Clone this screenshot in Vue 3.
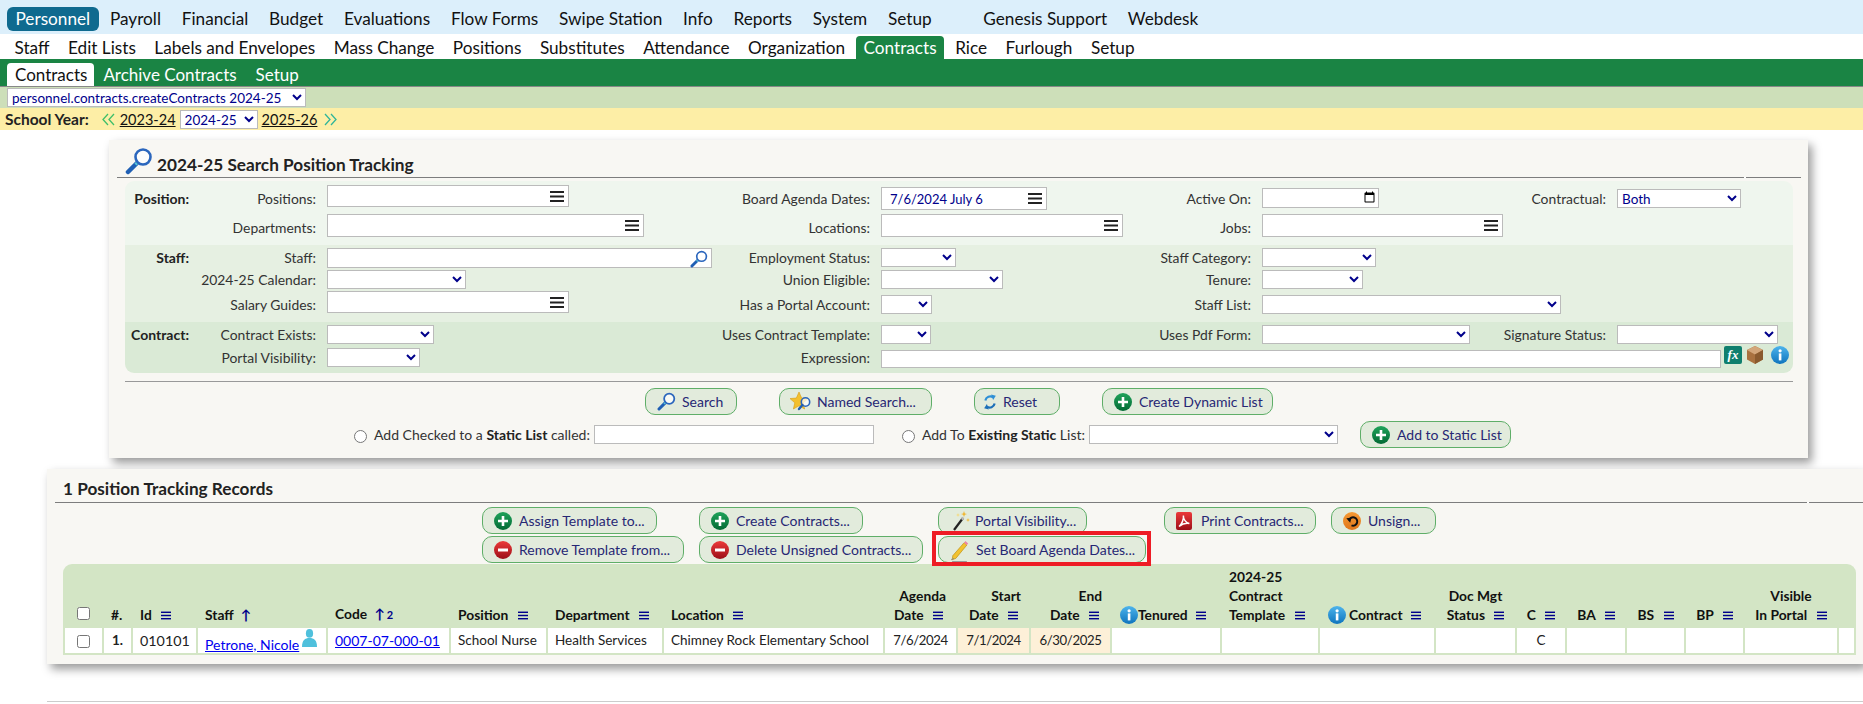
<script setup>
const nav1 = ['Payroll','Financial','Budget','Evaluations','Flow Forms','Swipe Station','Info','Reports','System','Setup']
const nav1b = ['Genesis Support','Webdesk']
const nav2a = ['Staff','Edit Lists','Labels and Envelopes','Mass Change','Positions','Substitutes','Attendance','Organization']
const nav2b = ['Rice','Furlough','Setup']

const sections = [
  { cls: 's1', rows: [
    { h: 33, lt: 18, title: 'Position:', cells: [
      { c: 1, label: 'Positions:', kind: 'list', w: 242, fh: 22, t: 4 },
      { c: 2, label: 'Board Agenda Dates:', kind: 'list', w: 166, fh: 23, t: 6, value: '7/6/2024 July 6' },
      { c: 3, label: 'Active On:', kind: 'date', w: 117, fh: 20, t: 7 },
      { c: 4, label: 'Contractual:', kind: 'sel', w: 124, fh: 19, t: 8, value: 'Both' }
    ]},
    { h: 31, lt: 14, cells: [
      { c: 1, label: 'Departments:', kind: 'list', w: 317, fh: 23, t: 0 },
      { c: 2, label: 'Locations:', kind: 'list', w: 242, fh: 23, t: 0 },
      { c: 3, label: 'Jobs:', kind: 'list', w: 241, fh: 23, t: 0 }
    ]}
  ]},
  { cls: 's2', rows: [
    { h: 24, lt: 13, title: 'Staff:', cells: [
      { c: 1, label: 'Staff:', kind: 'staff', w: 385, fh: 20, t: 3 },
      { c: 2, label: 'Employment Status:', kind: 'sel', w: 75, fh: 19, t: 3 },
      { c: 3, label: 'Staff Category:', kind: 'sel', w: 114, fh: 19, t: 3 }
    ]},
    { h: 21, lt: 11, cells: [
      { c: 1, label: '2024-25 Calendar:', kind: 'sel', w: 139, fh: 19, t: 1 },
      { c: 2, label: 'Union Eligible:', kind: 'sel', w: 122, fh: 19, t: 1 },
      { c: 3, label: 'Tenure:', kind: 'sel', w: 101, fh: 19, t: 1 }
    ]},
    { h: 32, lt: 15, cells: [
      { c: 1, label: 'Salary Guides:', kind: 'list', w: 242, fh: 22, t: 1 },
      { c: 2, label: 'Has a Portal Account:', kind: 'sel', w: 51, fh: 19, t: 5 },
      { c: 3, label: 'Staff List:', kind: 'sel', w: 299, fh: 19, t: 5 }
    ]}
  ]},
  { cls: 's3', rows: [
    { h: 24, lt: 13, title: 'Contract:', cells: [
      { c: 1, label: 'Contract Exists:', kind: 'sel', w: 107, fh: 19, t: 3 },
      { c: 2, label: 'Uses Contract Template:', kind: 'sel', w: 50, fh: 19, t: 3 },
      { c: 3, label: 'Uses Pdf Form:', kind: 'sel', w: 208, fh: 19, t: 3 },
      { c: 4, label: 'Signature Status:', kind: 'sel', w: 161, fh: 19, t: 3 }
    ]},
    { h: 27, lt: 12, cells: [
      { c: 1, label: 'Portal Visibility:', kind: 'sel', w: 93, fh: 19, t: 2 },
      { c: 2, label: 'Expression:', kind: 'expr', w: 840, fh: 18, t: 4 }
    ]}
  ]}
]

const searchButtons = [
  { icon: 'mag', text: 'Search', w: 92 },
  { icon: 'star', text: 'Named Search...', w: 153 },
  { icon: 'sync', text: 'Reset', w: 86 },
  { icon: 'plus', text: 'Create Dynamic List', w: 171 }
]

const actionCols = [
  { w: 202, gap: 15, btns: [{ icon: 'plus', text: 'Assign Template to...', w: 175 }, { icon: 'minus', text: 'Remove Template from...', w: 202 }] },
  { w: 224, gap: 15, btns: [{ icon: 'plus', text: 'Create Contracts...', w: 164 }, { icon: 'minus', text: 'Delete Unsigned Contracts...', w: 224 }] },
  { w: 208, gap: 18, btns: [{ icon: 'wand', text: 'Portal Visibility...', w: 149 }, { icon: 'pencil', text: 'Set Board Agenda Dates...', w: 208, marked: true }] },
  { w: 152, gap: 15, btns: [{ icon: 'pdf', text: 'Print Contracts...', w: 152 }] },
  { w: 105, gap: 0, btns: [{ icon: 'undo', text: 'Unsign...', w: 105 }] }
]

const colWidths = [37,27,63,128,121,95,114,219,71,71,79,108,96,114,79,48,58,57,57,92,15]
const trailing = ['', '', '', '', 'C', '', '', '', '', '']
</script>

<template>
  <svg class="sprite" aria-hidden="true">
    <defs>
      <linearGradient id="gGreen" x1="0" y1="0" x2="0" y2="1"><stop offset="0" stop-color="#1fa35a"/><stop offset="1" stop-color="#036a35"/></linearGradient>
      <linearGradient id="gRed" x1="0" y1="0" x2="0" y2="1"><stop offset="0" stop-color="#ec3a3a"/><stop offset="1" stop-color="#9c0f18"/></linearGradient>
      <linearGradient id="gBlue" x1="0" y1="0" x2="0" y2="1"><stop offset="0" stop-color="#4db4ec"/><stop offset="1" stop-color="#0f74bd"/></linearGradient>
      <linearGradient id="gOrange" x1="0" y1="0" x2="0" y2="1"><stop offset="0" stop-color="#f59a34"/><stop offset="1" stop-color="#e0761a"/></linearGradient>
    </defs>
    <symbol id="i-menu" viewBox="0 0 14 11"><rect width="14" height="2" y="0"/><rect width="14" height="2" y="4.5"/><rect width="14" height="2" y="9"/></symbol>
    <symbol id="i-mag" viewBox="0 0 28 28">
      <path d="M3 25 L12 16" stroke="#1f5fb4" stroke-width="4.5" stroke-linecap="round"/>
      <path d="M10.5 17.5 L13 15" stroke="#58c7d8" stroke-width="3"/>
      <circle cx="18" cy="10" r="7.5" fill="#fff" fill-opacity=".75" stroke="#2b66bd" stroke-width="2.6"/>
    </symbol>
    <symbol id="i-plus" viewBox="0 0 18 18"><circle cx="9" cy="9" r="9" fill="url(#gGreen)"/><path d="M9 4v10M4 9h10" stroke="#fff" stroke-width="2.6"/></symbol>
    <symbol id="i-minus" viewBox="0 0 18 18"><circle cx="9" cy="9" r="9" fill="url(#gRed)"/><path d="M4 9h10" stroke="#fff" stroke-width="3"/></symbol>
    <symbol id="i-info" viewBox="0 0 18 18"><circle cx="9" cy="9" r="9" fill="url(#gBlue)"/><rect x="7.8" y="7.4" width="2.6" height="7" fill="#fff"/><circle cx="9.1" cy="4.8" r="1.6" fill="#fff"/></symbol>
    <symbol id="i-undo" viewBox="0 0 18 18"><circle cx="9" cy="9" r="9" fill="url(#gOrange)"/><path d="M6 8.5 A4.2 4.2 0 1 1 8.5 13.4" fill="none" stroke="#111" stroke-width="2"/><path d="M3.3 6.2 L8.4 5.8 L7.2 10.8Z" fill="#111"/></symbol>
    <symbol id="i-pdf" viewBox="0 0 16 18"><rect width="16" height="18" rx="2" fill="url(#gRed)"/><path d="M3 14.5 C6 12 8 7 7.4 3.6 C7 7 10 11 13.4 11.4 C10 10.8 6 12 3 14.5Z" fill="none" stroke="#fff" stroke-width="1.5"/></symbol>
    <symbol id="i-sync" viewBox="0 0 18 22">
      <path d="M3 9 A6.5 6.5 0 0 1 13 5" fill="none" stroke="#2f8fd6" stroke-width="2.8"/><path d="M10.5 1.5 L16.5 3 L13 8.5Z" fill="#2f8fd6"/>
      <path d="M15 13 A6.5 6.5 0 0 1 5 17" fill="none" stroke="#1c6fb8" stroke-width="2.8"/><path d="M7.5 20.5 L1.5 19 L5 13.5Z" fill="#1c6fb8"/>
    </symbol>
    <symbol id="i-star" viewBox="0 0 24 22">
      <path d="M9 1 L11.6 7 L18 7.6 L13.2 11.8 L14.6 18 L9 14.8 L3.4 18 L4.8 11.8 L0 7.6 L6.4 7Z" fill="#f3c02f" stroke="#d89a12" stroke-width=".6"/>
      <circle cx="15.5" cy="11" r="4.2" fill="#fff" fill-opacity=".7" stroke="#2b66bd" stroke-width="1.6"/>
      <path d="M12.4 14 L9 18" stroke="#1f5fb4" stroke-width="2.4" stroke-linecap="round"/>
    </symbol>
    <symbol id="i-wand" viewBox="0 0 18 22">
      <path d="M2 20 L11 8" stroke="#222" stroke-width="2.2"/><path d="M9.8 9.6 L11.4 7.4" stroke="#bbb" stroke-width="2.2"/>
      <path d="M12 1l.8 2.4L15 4l-2.2.8L12 7l-.8-2.2L9 4l2.2-.6Z" fill="#f0b429"/><path d="M16 8l.5 1.5L18 10l-1.5.5L16 12l-.5-1.5L14 10l1.5-.5Z" fill="#f0b429"/><path d="M6 3l.5 1.5L8 5l-1.5.5L6 7l-.5-1.5L4 5l1.5-.5Z" fill="#f7d774"/>
    </symbol>
    <symbol id="i-pencil" viewBox="0 0 20 26">
      <path d="M15 4 L18 6.5 L6 21 L2 22.5 L2.8 18Z" fill="#f2c230" stroke="#b98d12" stroke-width=".7"/>
      <path d="M15 4 L16.4 2.3 L19.4 4.8 L18 6.5Z" fill="#ee82a6"/>
      <path d="M2 24.5 H18" stroke="#999" stroke-width="1.4"/><path d="M1 22.5 L4 21" stroke="#888" stroke-width="1"/>
    </symbol>
    <symbol id="i-box" viewBox="0 0 16 18">
      <path d="M8 0 L16 4 V13.5 L8 18 L0 13.5 V4Z" fill="#a9713f"/><path d="M8 0 L16 4 L8 8.5 L0 4Z" fill="#d3a67a"/><path d="M8 8.5 L16 4 V13.5 L8 18Z" fill="#8a5a2e"/>
    </symbol>
    <symbol id="i-person" viewBox="0 0 15 18"><ellipse cx="7.5" cy="4.4" rx="3.6" ry="4.4" fill="#4fc0dc"/><path d="M0 18 C0 11 3 9 7.5 9 C12 9 15 11 15 18Z" fill="#4fc0dc"/></symbol>
    <symbol id="i-dbl" viewBox="0 0 13 13"><path d="M6 1 L1 6.5 L6 12 M12 1 L7 6.5 L12 12" fill="none" stroke="currentColor" stroke-width="1.3"/></symbol>
  </svg>

  <div class="page">
    <nav class="nav1">
      <a class="n1 on">Personnel</a>
      <a v-for="n in nav1" :key="n" class="n1">{{ n }}</a>
      <span class="spacer"></span>
      <a v-for="n in nav1b" :key="n" class="n1">{{ n }}</a>
    </nav>
    <nav class="nav2">
      <a v-for="n in nav2a" :key="n" class="n2">{{ n }}</a>
      <a class="n2 on">Contracts</a>
      <a v-for="n in nav2b" :key="n" class="n2">{{ n }}</a>
    </nav>
    <nav class="nav3">
      <a class="n3 on">Contracts</a>
      <a class="n3">Archive Contracts</a>
      <a class="n3">Setup</a>
    </nav>
    <div class="ctx">
      <select class="ctx-sel"><option>personnel.contracts.createContracts 2024-25</option></select>
    </div>
    <div class="year">
      <b>School Year:</b>
      <svg class="chev first"><use href="#i-dbl"/></svg>
      <a class="ylink">2023-24</a>
      <select class="y-sel"><option>2024-25</option></select>
      <a class="ylink">2025-26</a>
      <svg class="chev last"><use href="#i-dbl"/></svg>
    </div>

    <section class="panel search">
      <header class="ph one">
        <svg class="ph-mag"><use href="#i-mag"/></svg>
        <h2>2024-25 Search Position Tracking</h2>
      </header>
      <div class="rule notch1"></div>
      <div class="form">
        <div v-for="(sec, si) in sections" :key="si" class="sec" :class="sec.cls">
          <div v-for="(row, ri) in sec.rows" :key="ri" class="frow" :style="{ height: row.h + 'px' }">
            <b v-if="row.title" class="sec-title" :style="{ marginTop: row.lt - 10 + 'px' }">{{ row.title }}</b>
            <template v-for="cell in row.cells" :key="cell.label">
              <span class="flabel" :style="{ gridColumn: cell.c * 2, marginTop: row.lt - 10 + 'px' }">{{ cell.label }}</span>
              <div class="fcell" :style="{ gridColumn: cell.kind === 'expr' ? '5 / -1' : cell.c * 2 + 1, paddingTop: cell.t + 'px' }">
                <div v-if="cell.kind === 'list'" class="inp" :style="{ width: cell.w + 'px', height: cell.fh + 'px' }">
                  <span class="val">{{ cell.value }}</span>
                  <svg class="ic-menu"><use href="#i-menu"/></svg>
                </div>
                <div v-else-if="cell.kind === 'staff'" class="inp" :style="{ width: cell.w + 'px', height: cell.fh + 'px' }">
                  <svg class="ic-mag-s"><use href="#i-mag"/></svg>
                </div>
                <select v-else-if="cell.kind === 'sel'" class="sel" :style="{ width: cell.w + 'px', height: cell.fh + 'px' }">
                  <option>{{ cell.value || '' }}</option>
                </select>
                <input v-else-if="cell.kind === 'date'" type="date" class="date" :style="{ width: cell.w + 'px', height: cell.fh + 'px' }">
                <div v-else class="expr">
                  <input class="txt" type="text" :style="{ width: cell.w + 'px', height: cell.fh + 'px' }">
                  <span class="fx"><i>fx</i></span>
                  <svg class="ic-box"><use href="#i-box"/></svg>
                  <svg class="ic-info"><use href="#i-info"/></svg>
                </div>
              </div>
            </template>
          </div>
        </div>
      </div>
      <div class="rule2"></div>
      <div class="btnrow">
        <button v-for="b in searchButtons" :key="b.text" class="btn" :style="{ width: b.w + 'px' }">
          <svg class="bi" :class="'bi-' + b.icon"><use :href="'#i-' + b.icon"/></svg>{{ b.text }}
        </button>
      </div>
      <div class="staticrow">
        <input type="radio" class="radio">
        <span class="stxt">Add Checked to a <b>Static List</b> called:</span>
        <input type="text" class="txt static-in">
        <input type="radio" class="radio r2">
        <span class="stxt">Add To <b>Existing Static</b> List:</span>
        <select class="sel static-sel"><option></option></select>
        <button class="btn static-btn"><svg class="bi bi-plus"><use href="#i-plus"/></svg>Add to Static List</button>
      </div>
    </section>

    <section class="panel records">
      <header class="ph two"><h2>1 Position Tracking Records</h2></header>
      <div class="rule notch2"></div>
      <div class="actions">
        <div v-for="(col, ci) in actionCols" :key="ci" class="acol" :style="{ width: col.w + 'px', marginRight: col.gap + 'px' }">
          <button v-for="b in col.btns" :key="b.text" class="btn" :class="{ marked: b.marked }" :style="{ width: b.w + 'px' }">
            <svg class="bi" :class="'bi-' + b.icon"><use :href="'#i-' + b.icon"/></svg>{{ b.text }}
          </button>
        </div>
      </div>
      <table class="grid">
        <colgroup><col v-for="(w, i) in colWidths" :key="i" :style="{ width: w + 'px' }"></colgroup>
        <thead>
          <tr>
            <th class="cb"><input type="checkbox" class="chk"></th>
            <th class="num">#.</th>
            <th>Id <svg class="m"><use href="#i-menu"/></svg></th>
            <th>Staff <span class="sort">↑</span></th>
            <th>Code <span class="sort">↑<small>2</small></span></th>
            <th>Position <svg class="m"><use href="#i-menu"/></svg></th>
            <th>Department <svg class="m"><use href="#i-menu"/></svg></th>
            <th>Location <svg class="m"><use href="#i-menu"/></svg></th>
            <th class="r ag">Agenda<br>Date <svg class="m"><use href="#i-menu"/></svg></th>
            <th class="r">Start<br>Date <svg class="m"><use href="#i-menu"/></svg></th>
            <th class="r">End<br>Date <svg class="m"><use href="#i-menu"/></svg></th>
            <th class="ti"><svg class="info"><use href="#i-info"/></svg>Tenured <svg class="m mw"><use href="#i-menu"/></svg></th>
            <th>2024-25<br>Contract<br>Template <svg class="m"><use href="#i-menu"/></svg></th>
            <th class="ti"><svg class="info g"><use href="#i-info"/></svg>Contract <svg class="m mw"><use href="#i-menu"/></svg></th>
            <th class="c">Doc Mgt<br>Status <svg class="m"><use href="#i-menu"/></svg></th>
            <th class="c">C <svg class="m"><use href="#i-menu"/></svg></th>
            <th class="c">BA <svg class="m"><use href="#i-menu"/></svg></th>
            <th class="c">BS <svg class="m"><use href="#i-menu"/></svg></th>
            <th class="c">BP <svg class="m"><use href="#i-menu"/></svg></th>
            <th class="c">Visible<br>In Portal <svg class="m"><use href="#i-menu"/></svg></th>
            <th></th>
          </tr>
        </thead>
        <tbody>
          <tr>
            <td class="cb"><input type="checkbox" class="chk"></td>
            <td class="num"><b>1.</b></td>
            <td class="id">010101</td>
            <td class="who"><a class="lnk low">Petrone, Nicole</a><svg class="person"><use href="#i-person"/></svg></td>
            <td><a class="lnk">0007-07-000-01</a></td>
            <td>School Nurse</td>
            <td>Health Services</td>
            <td>Chimney Rock Elementary School</td>
            <td class="c dt">7/6/2024</td>
            <td class="c dt tan">7/1/2024</td>
            <td class="c dt tan">6/30/2025</td>
            <td v-for="(t, i) in trailing" :key="i" class="c">{{ t }}</td>
          </tr>
        </tbody>
      </table>
    </section>
    <div class="foot"></div>
  </div>
</template>

<style>
html, body { margin: 0; background: #fff; overflow: hidden; }
</style>

<style scoped>
.sprite { position: absolute; width: 0; height: 0; }
.page { font-family: Lato, "Noto Sans", sans-serif; font-size: 14px; color: #222; width: 1863px; }
.page svg { display: inline-block; }

.nav1 { height: 34px; background: #dceffb; display: flex; align-items: center; padding-left: 7px; box-sizing: border-box; padding-top: 4px; gap: 1.8px; }
.n1 { font-size: 17.2px; color: #111; padding: 0 9.5px; height: 24px; line-height: 24px; border-radius: 6px; }
.n1.on { background: #0f6a8f; color: #fff; padding: 0 8.5px; }
.spacer { width: 29px; }
.nav2 { height: 25px; display: flex; align-items: flex-end; padding-left: 7px; gap: 3.5px; background: #fff; }
.n2 { font-size: 17.2px; color: #111; padding: 0 7.5px; height: 23px; line-height: 23px; }
.n2.on { background: #1a8444; color: #fff; border-radius: 4px 4px 0 0; }
.nav3 { height: 27px; background: #1a8444; display: flex; align-items: flex-end; padding-left: 7px; border-bottom: 1px solid #888; }
.n3 { font-size: 17px; color: #fff; height: 23px; line-height: 23px; padding: 0 8px; margin-right: 3px; }
.n3.on { background: #fff; color: #111; border-radius: 4px 4px 0 0; padding: 0 7px 0 8px; margin-right: 1px; }
.ctx { height: 21px; background: #cddfb9; display: flex; align-items: center; padding-left: 7px; }
.ctx-sel { width: 299px; height: 19px; font: 13.5px Lato, sans-serif; color: #00008b; border: 1px solid #bbb; background: #fff; padding: 0; }
.year { height: 22px; background: #fdeea6; display: flex; align-items: center; padding-left: 5px; font-size: 14.5px; }
.year b { font-weight: 700; font-size: 15.5px; }
.chev { width: 13px; height: 13px; flex: none; }
.chev.first { color: #3fbf6a; margin: 0 5px 0 13px; }
.chev.last { color: #2fb59a; transform: scaleX(-1); margin-left: 7px; }
.ylink { text-decoration: underline; color: #111; }
.y-sel { width: 78px; height: 19px; margin: 0 4px; font: 13.5px Lato, sans-serif; color: #00008b; border: 1px solid #bbb; background: #fff; padding: 0; }

.panel { background: #f8f7f3; box-shadow: 4px 5px 9px rgba(0,0,0,.4); }
.search { margin: 10px 0 0 109px; width: 1699px; height: 318px; padding-left: 8px; box-sizing: border-box; }
.ph { display: flex; align-items: center; }
.ph h2 { margin: 0; font-size: 17.2px; font-weight: 700; color: #222; line-height: 20px; }
.ph.one { height: 37px; padding: 0 0 0 8px; gap: 4px; }
.ph-mag { width: 28px; height: 28px; margin-top: 4px; }
.ph.one h2 { margin-top: 12px; }
.rule { height: 1px; background: #7d7d7d; position: relative; }
.notch1 { width: 1684px; }
.notch1::after, .notch2::after { content: ""; position: absolute; top: 0; width: 2px; height: 1px; background: #fff; }
.notch1::after { left: 1627px; }
.notch2::after { left: 1752px; }

.form { width: 1668px; margin: 3px 0 0 8px; border-radius: 9px; overflow: hidden; }
.s1 { background: #eff6ee; } .s2 { background: #e6f0e2; } .s3 { background: #daead6; }
.frow { display: grid; grid-template-columns: 64px 127px 400px 154px 280px 101px 239px 116px 187px; align-items: start; }
.sec-title { grid-column: 1; text-align: right; line-height: 20px; font-weight: 700; color: #222; }
.flabel { text-align: right; line-height: 20px; color: #333; white-space: nowrap; font-size: 13.9px; }
.fcell { padding-left: 11px; }
.inp { box-sizing: border-box; background: #fff; border: 1px solid #bbb; display: flex; align-items: center; justify-content: space-between; padding: 0 4px 0 8px; color: #00008b; font-size: 13px; }
.val { white-space: nowrap; }
.ic-menu { width: 14px; height: 11px; fill: #222; flex: none; }
.ic-mag-s { width: 18px; height: 18px; margin-left: auto; margin-right: -1px; margin-top: 2px; }
.sel, .date, .txt { box-sizing: border-box; background: #fff; border: 1px solid #bbb; color: #00008b; font: 13.5px Lato, sans-serif; padding: 0; display: block; border-radius: 0; }
.date::-webkit-datetime-edit { color: transparent; }
.expr { display: flex; align-items: flex-start; }
.txt { flex: none; }
.fx { width: 18px; height: 18px; margin: -4px 0 0 3px; background: #0f7f6e; color: #fff; font: italic 700 13px "Liberation Serif", serif; border-radius: 2px; display: flex; align-items: center; justify-content: center; }
.ic-box { width: 16px; height: 18px; margin: -4px 0 0 5px; }
.ic-info { width: 18px; height: 18px; margin: -4px 0 0 8px; }

.rule2 { height: 1px; width: 1668px; background: #999; margin: 8px 0 0 8px; }
.btnrow { display: flex; justify-content: center; gap: 42px; margin: 6px 0 0 8px; width: 1668px; }
.btn { box-sizing: border-box; height: 27px; border: 1px solid #5fae68; border-radius: 10px; background: #e2ebdc; color: #272774; font: 14px Lato, sans-serif; display: flex; align-items: center; justify-content: flex-start; padding: 0 0 0 11px; white-space: nowrap; position: relative; }
.bi { width: 18px; height: 18px; margin-right: 7px; flex: none; }
.bi-mag { width: 19px; height: 19px; margin-right: 6px; }
.bi-pdf { width: 16px; height: 18px; margin-right: 9px; }
.bi-pencil { width: 19px; height: 24px; margin-right: 7px; margin-top: 2px; }
.bi-sync { width: 14px; height: 20px; margin-right: 6px; margin-left: -3px; }
.bi-star { width: 24px; height: 22px; margin-right: 3px; margin-left: -1px; }
.bi-wand { margin-left: 2px; margin-right: 5px; height: 22px; }
.staticrow { display: flex; align-items: center; margin: 6px 0 0 237px; height: 27px; }
.radio { width: 13px; height: 13px; margin: 4px 7px 0 0; }
.r2 { margin-left: 28px; }
.stxt { white-space: nowrap; margin-right: 4px; color: #333; }
.stxt b { font-weight: 700; color: #222; }
.static-in { width: 280px; height: 19px; }
.static-sel { width: 249px; height: 19px; }
.static-btn { width: 151px; margin-left: 22px; }

.records { margin: 11px 0 0 47px; width: 1816px; height: 195px; padding-left: 8px; box-sizing: border-box; }
.ph.two { height: 33px; padding-left: 8px; }
.ph.two h2 { margin-top: 7px; }
.notch2 { width: 1808px; }
.actions { display: flex; margin: 4px 0 0 427px; height: 56px; }
.acol { display: flex; flex-direction: column; gap: 2px; flex: none; }
.marked::after { content: ""; position: absolute; left: -7px; top: -6px; width: 219px; height: 35px; box-sizing: border-box; border: 4px solid #ee1c25; pointer-events: none; }

.grid { margin: 1px 0 0 8px; width: 1792px; table-layout: fixed; border-collapse: separate; border-spacing: 2px; background: #d3e5c5; border-radius: 9px 9px 0 0; }
.grid th { vertical-align: bottom; text-align: left; font-weight: 700; font-size: 13.8px; line-height: 19px; padding: 0 0 2px 7px; color: #111; white-space: nowrap; height: 58px; box-sizing: content-box; }
.grid th.r { text-align: right; padding-right: 8px; padding-left: 0; }
.grid th.r .m { margin-right: 3px; }
.grid th.ag { padding-right: 10px; }
.grid th.c { text-align: center; padding-left: 0; }
.grid th.cb, .grid td.cb { text-align: center; padding: 0; }
.grid th.cb .chk { margin: 0 0 6px; }
.grid th.num { padding-left: 7px; }
.grid th.ti { padding-left: 8px; }
.m { width: 10px; height: 9px; fill: #00008b; margin-left: 6px; }
.sort { color: #00008b; font-weight: 700; margin-left: 4px; }
.sort small { font-size: 11px; font-weight: 700; margin-left: 2px; }
.info { width: 18px; height: 18px; vertical-align: -4px; }
.info.g { margin-right: 3px; }
.mw { margin-left: 5px; }
.grid td { background: #fff; height: 25px; padding: 0 0 0 7px; line-height: 19px; color: #222; white-space: nowrap; font-size: 13.5px; box-sizing: border-box; }
.grid td.id { font-size: 14.3px; }
.grid td.c { text-align: center; padding: 0; }
.grid td.dt { font-size: 13.2px; letter-spacing: -.4px; }
.grid td.tan { background: #fdf0d8; }
.grid td.num { padding: 0; text-align: center; }
.chk { width: 13px; height: 13px; margin: 0; vertical-align: middle; }
.lnk { color: #0000ee; text-decoration: underline; font-size: 14px; }
.low { position: relative; top: 2px; }
.who { position: relative; }
.person { width: 15px; height: 18px; margin-left: 3px; vertical-align: 1px; }
.foot { margin: 37px 0 0 47px; height: 1px; background: #ccc; }
</style>
